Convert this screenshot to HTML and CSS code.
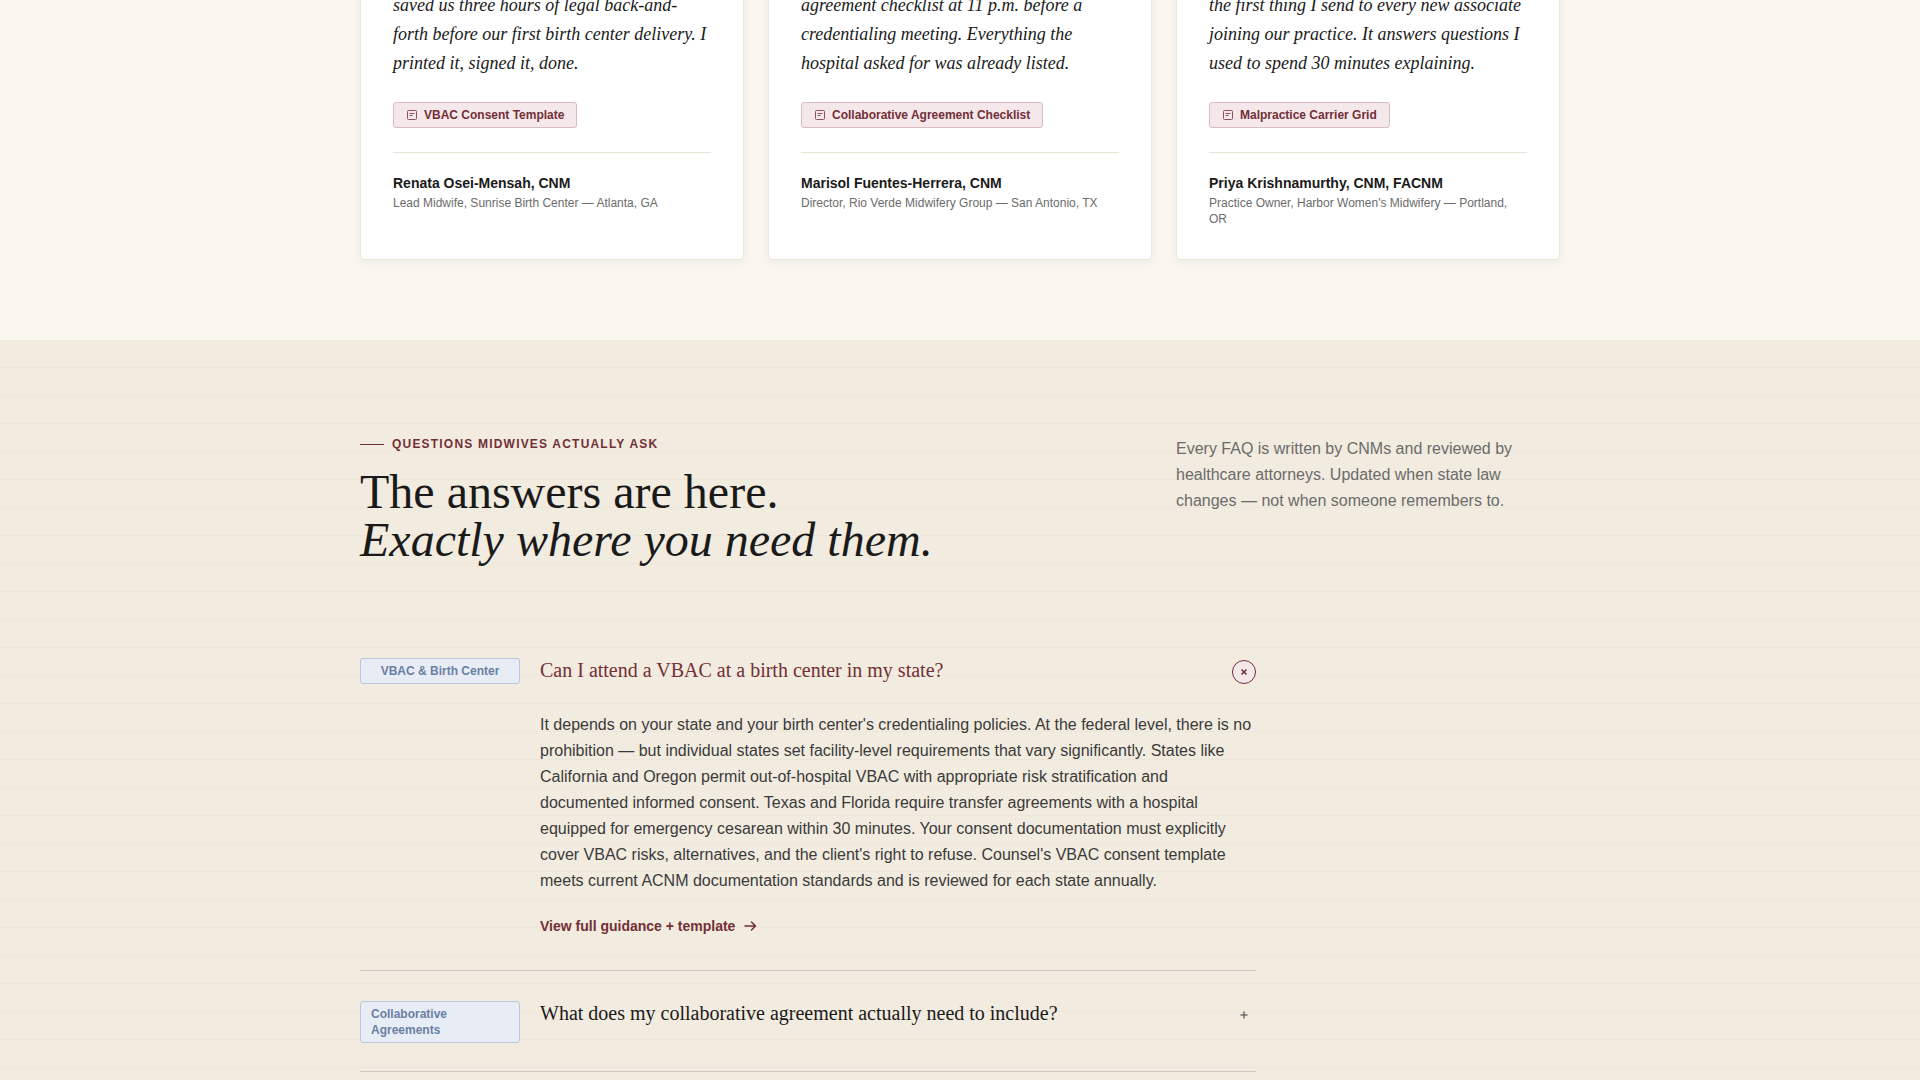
FILE: index.html
```html
<!DOCTYPE html>
<html lang="en">
<head>
  <meta charset="UTF-8">
  <meta name="viewport" content="width=device-width, initial-scale=1">
  <title>Counsel</title>
  <link rel="stylesheet" href="styles.css">
</head>
<body>

<section class="testimonials">
  <div class="container card-grid">
    <article class="card">
      <p class="quote">saved us three hours of legal back-and-forth before our first birth center delivery. I printed it, signed it, done.</p>
      <span class="resource">
        <svg width="12" height="12" viewBox="0 0 12 12" fill="none" stroke="currentColor"><rect x="1.5" y="1.5" width="9" height="9" rx="1"/><path d="M3.5 4.5h5M3.5 6.5h3"/></svg>
        VBAC Consent Template
      </span>
      <div class="author">
        <div class="author-name">Renata Osei-Mensah, CNM</div>
        <div class="author-role">Lead Midwife, Sunrise Birth Center — Atlanta, GA</div>
      </div>
    </article>
    <article class="card">
      <p class="quote">agreement checklist at 11 p.m. before a credentialing meeting. Everything the hospital asked for was already listed.</p>
      <span class="resource">
        <svg width="12" height="12" viewBox="0 0 12 12" fill="none" stroke="currentColor"><rect x="1.5" y="1.5" width="9" height="9" rx="1"/><path d="M3.5 4.5h5M3.5 6.5h3"/></svg>
        Collaborative Agreement Checklist
      </span>
      <div class="author">
        <div class="author-name">Marisol Fuentes-Herrera, CNM</div>
        <div class="author-role">Director, Rio Verde Midwifery Group — San Antonio, TX</div>
      </div>
    </article>
    <article class="card">
      <p class="quote">the first thing I send to every new associate joining our practice. It answers questions I used to spend 30 minutes explaining.</p>
      <span class="resource">
        <svg width="12" height="12" viewBox="0 0 12 12" fill="none" stroke="currentColor"><rect x="1.5" y="1.5" width="9" height="9" rx="1"/><path d="M3.5 4.5h5M3.5 6.5h3"/></svg>
        Malpractice Carrier Grid
      </span>
      <div class="author">
        <div class="author-name">Priya Krishnamurthy, CNM, FACNM</div>
        <div class="author-role">Practice Owner, Harbor Women's Midwifery — Portland, OR</div>
      </div>
    </article>
  </div>
</section>

<section class="faq">
  <div class="container">
    <header class="faq-header">
      <div class="faq-heading">
        <div class="eyebrow">Questions midwives actually ask</div>
        <h2>The answers are here.<br><em>Exactly where you need them.</em></h2>
      </div>
      <p class="faq-intro">Every FAQ is written by CNMs and reviewed by healthcare attorneys. Updated when state law changes — not when someone remembers to.</p>
    </header>

    <div class="faq-list">
      <div class="faq-item open">
        <span class="faq-tag">VBAC &amp; Birth Center</span>
        <div>
          <h3>
            <button class="faq-question" type="button" aria-expanded="true" aria-controls="answer-1">
              Can I attend a VBAC at a birth center in my state?
              <span class="toggle"><svg width="8" height="8" viewBox="0 0 8 8" fill="none" stroke="currentColor" stroke-width="1.5"><path d="M4 .5v7M.5 4h7"/></svg></span>
            </button>
          </h3>
          <div class="faq-answer" id="answer-1">
            <p>It depends on your state and your birth center's credentialing policies. At the federal level, there is no prohibition — but individual states set facility-level requirements that vary significantly. States like California and Oregon permit out-of-hospital VBAC with appropriate risk stratification and documented informed consent. Texas and Florida require transfer agreements with a hospital equipped for emergency cesarean within 30 minutes. Your consent documentation must explicitly cover VBAC risks, alternatives, and the client's right to refuse. Counsel's VBAC consent template meets current ACNM documentation standards and is reviewed for each state annually.</p>
            <a class="faq-link" href="#">
              View full guidance + template
              <svg width="14" height="14" viewBox="0 0 14 14" fill="none" stroke="currentColor" stroke-width="1.5" stroke-linecap="round" stroke-linejoin="round"><path d="M2 7h10M8.500 3l4 4-4 4"/></svg>
            </a>
          </div>
        </div>
      </div>

      <div class="faq-item">
        <span class="faq-tag">Collaborative Agreements</span>
        <div>
          <h3>
            <button class="faq-question" type="button" aria-expanded="false">
              What does my collaborative agreement actually need to include?
              <span class="toggle"><svg width="8" height="8" viewBox="0 0 8 8" fill="none" stroke="currentColor" stroke-width="1.5"><path d="M4 .5v7M.5 4h7"/></svg></span>
            </button>
          </h3>
        </div>
      </div>
    </div>
  </div>
</section>

<script>
  document.querySelectorAll('.faq-question').forEach(function (button) {
    button.addEventListener('click', function () {
      const open = button.closest('.faq-item').classList.toggle('open');
      button.setAttribute('aria-expanded', open);
    });
  });
</script>
</body>
</html>
```
FILE: styles.css
```css
:root {
  --wine: #722f37;
  --ink: #1a1a1a;
  --muted: #6b6b6b;
  --sans: "Liberation Sans", Arial, sans-serif;
  --serif: "Liberation Serif", "Times New Roman", serif;
}

* {
  box-sizing: border-box;
  margin: 0;
  padding: 0;
}

body {
  background: #faf7f0;
  color: var(--ink);
  font-family: var(--sans);
  font-size: 16px;
  line-height: 26px;
}

.container {
  max-width: 1200px;
  margin: 0 auto;
}

/* Testimonials */
.testimonials {
  margin-top: -42px;
  padding-bottom: 80px;
}

.card-grid {
  display: grid;
  grid-template-columns: repeat(3, 1fr);
  gap: 24px;
}

.card {
  background: #fff;
  border: 1px solid #ebe6da;
  border-radius: 4px;
  box-shadow: 0 2px 8px rgba(60, 50, 20, 0.07);
  padding: 32px;
}

.quote {
  font-family: var(--serif);
  font-size: 18px;
  font-style: italic;
  line-height: 29px;
  margin-bottom: 24px;
}

.resource {
  display: inline-flex;
  align-items: center;
  gap: 6px;
  padding: 4px 12px;
  background: #f5e8ea;
  border: 1px solid #d8bcc2;
  border-radius: 3px;
  color: var(--wine);
  font-size: 12px;
  font-weight: bold;
  line-height: 16px;
  vertical-align: top;
}

.resource svg {
  opacity: 0.8;
}

.author {
  border-top: 1px solid #e8e4d8;
  margin-top: 24px;
  padding-top: 20px;
}

.author-name {
  font-size: 14px;
  font-weight: bold;
  line-height: 20px;
}

.author-role {
  color: var(--muted);
  font-size: 12px;
  line-height: 16px;
  margin-top: 2px;
}

/* FAQ */
.faq {
  background: repeating-linear-gradient(transparent 0 27px, #ece5d9 27px 28px), #f2ebdf;
  padding: 96px 0;
}

.faq-header {
  display: grid;
  grid-template-columns: repeat(3, 1fr);
  gap: 24px;
  margin-bottom: 64px;
}

.faq-heading {
  grid-column: span 2;
}

.eyebrow {
  display: flex;
  align-items: center;
  gap: 8px;
  color: var(--wine);
  font-size: 12px;
  font-weight: bold;
  letter-spacing: 0.1em;
  line-height: 16px;
  text-transform: uppercase;
  margin-bottom: 16px;
}

.eyebrow::before {
  content: "";
  width: 24px;
  height: 1px;
  background: currentColor;
}

h2 {
  font-family: var(--serif);
  font-size: 48px;
  font-weight: normal;
  line-height: 48px;
}

.faq-intro {
  color: var(--muted);
}

.faq-list {
  max-width: 896px;
}

.faq-item {
  display: grid;
  grid-template-columns: 160px 1fr;
  align-items: start;
  gap: 20px;
  border-bottom: 1px solid #cfc6c4;
  padding: 28px 0;
}

.faq-tag {
  display: flex;
  justify-content: center;
  margin-top: 2px;
  padding: 4px 10px;
  background: #e8ecf5;
  border: 1px solid #bcc6da;
  border-radius: 3px;
  color: #6b7fa3;
  font-size: 12px;
  font-weight: bold;
  line-height: 16px;
}

.faq-question {
  display: flex;
  justify-content: space-between;
  align-items: flex-end;
  width: 100%;
  background: none;
  border: none;
  color: var(--ink);
  cursor: pointer;
  font-family: var(--serif);
  font-size: 20px;
  line-height: 28px;
  text-align: left;
}

.open .faq-question {
  color: var(--wine);
}

.toggle {
  display: flex;
  align-items: center;
  justify-content: center;
  width: 24px;
  height: 24px;
  border-radius: 50%;
  color: var(--muted);
}

.open .toggle {
  background: #f5e8ea;
  border: 1px solid var(--wine);
  color: var(--wine);
}

.open .toggle svg {
  transform: rotate(45deg);
}

.faq-answer {
  display: none;
  color: #3a3a3a;
  padding: 28px 0 4px;
}

.open .faq-answer {
  display: block;
}

.faq-link {
  display: inline-flex;
  align-items: center;
  gap: 8px;
  margin-top: 20px;
  color: var(--wine);
  font-size: 14px;
  font-weight: bold;
  line-height: 24px;
  text-decoration: none;
  vertical-align: top;
}
```
